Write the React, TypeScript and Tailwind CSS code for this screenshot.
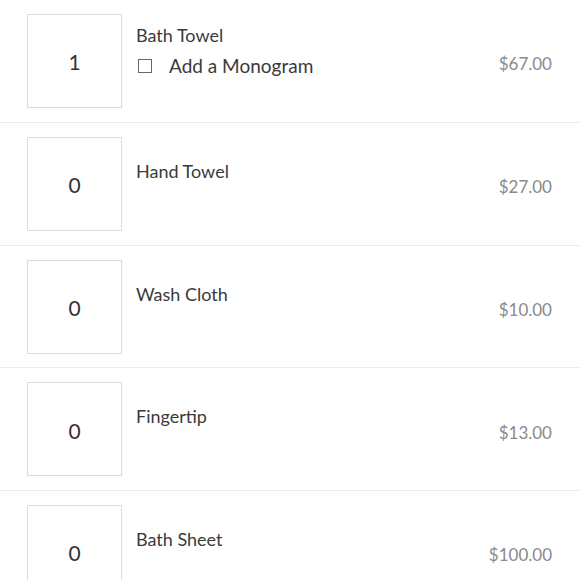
import { useState } from 'react';

type Item = { name: string; qty: number; price: string; monogram?: boolean };

const items: Item[] = [
  { name: 'Bath Towel', qty: 1, price: '$67.00', monogram: true },
  { name: 'Hand Towel', qty: 0, price: '$27.00' },
  { name: 'Wash Cloth', qty: 0, price: '$10.00' },
  { name: 'Fingertip', qty: 0, price: '$13.00' },
  { name: 'Bath Sheet', qty: 0, price: '$100.00' },
];

function ItemRow({ item }: { item: Item }) {
  const [checked, setChecked] = useState(false);
  return (
    <div className="flex h-[122.75px] items-start border-b border-[#ececec] pl-[27px] pr-[28px] pt-[14px]">
      <div className="flex h-[94px] w-[95px] shrink-0 items-center justify-center border border-[#dcdcdc] pt-[2px] text-[21px] text-[#333]">
        {item.qty}
      </div>
      <div className={item.monogram ? 'flex-1 pl-[14px] pt-[9px]' : 'flex-1 pl-[14px] pt-[22px]'}>
        <div className="text-[18px] leading-[24px] text-[#3a3a3a]">{item.name}</div>
        {item.monogram ? (
          <label className="mt-[7px] flex items-center text-[19px] leading-[24px] text-[#3a3a3a]">
            <input
              type="checkbox"
              checked={checked}
              onChange={() => setChecked(!checked)}
              className="ml-[2px] mr-[17px] h-[14px] w-[14px] appearance-none border border-[#666] bg-white"
            />
            Add a Monogram
          </label>
        ) : null}
      </div>
      <div className="flex h-[94px] items-center pt-[6px] text-[17px] text-[#8a8a8a]">
        {item.price}
      </div>
    </div>
  );
}

export default function App() {
  return (
    <div className="h-[580px] w-[580px] overflow-hidden bg-white font-['Lato','Noto_Sans',sans-serif]">
      {items.map((item) => (
        <ItemRow key={item.name} item={item} />
      ))}
    </div>
  );
}
